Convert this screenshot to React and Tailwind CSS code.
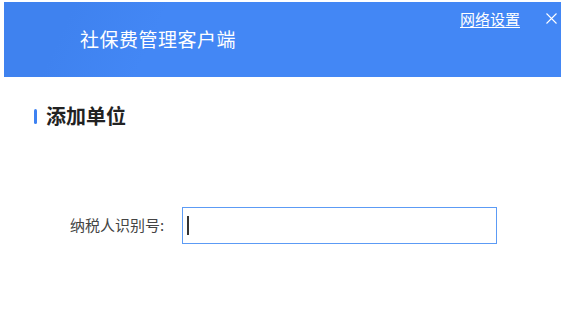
import React from 'react';

const App = () => {
  return (
    <div
      className="w-[561px] h-[324px] bg-white overflow-hidden"
      style={{ fontFamily: '"Noto Sans CJK SC", "Noto Sans", sans-serif' }}
    >
      <div className="ml-[4px] mt-[2px] h-[75px] flex bg-[#4387f5] bg-[linear-gradient(115deg,#3f82ef_0%,#3f82ef_12%,#4387f5_28%,#4387f5_100%)]">
        <div className="pl-[76px] pt-[24px] text-[19px] leading-[26px] text-white tracking-[0.5px]">
          社保费管理客户端
        </div>
        <div className="ml-auto flex items-start pt-[7px]">
          <a className="text-[15px] leading-[20px] text-white underline underline-offset-2 cursor-pointer">
            网络设置
          </a>
          <button className="ml-[26px] mr-[4px] mt-[4px] text-white" aria-label="关闭">
            <svg width="11" height="11" viewBox="0 0 11 11" stroke="currentColor" strokeWidth="1.1" fill="none">
              <path d="M0.5 0.5 L10.5 10.5 M10.5 0.5 L0.5 10.5" />
            </svg>
          </button>
        </div>
      </div>

      <div className="flex items-center pl-[34px] pt-[27px]">
        <span className="w-[3px] h-[15px] rounded-full bg-[#3e82f2]" />
        <span className="ml-[9px] text-[20px] leading-[24px] font-bold text-[#222]">添加单位</span>
      </div>

      <div className="flex items-center pl-[70px] pt-[79px]">
        <label className="w-[112px] text-[15px] text-[#444]">纳税人识别号:</label>
        <div className="w-[315px] h-[37px] border border-[#5c9bf5] bg-white flex items-center pl-[4px]">
          <span className="w-[1.5px] h-[19px] bg-[#333]" />
        </div>
      </div>
    </div>
  );
};

export default App;
